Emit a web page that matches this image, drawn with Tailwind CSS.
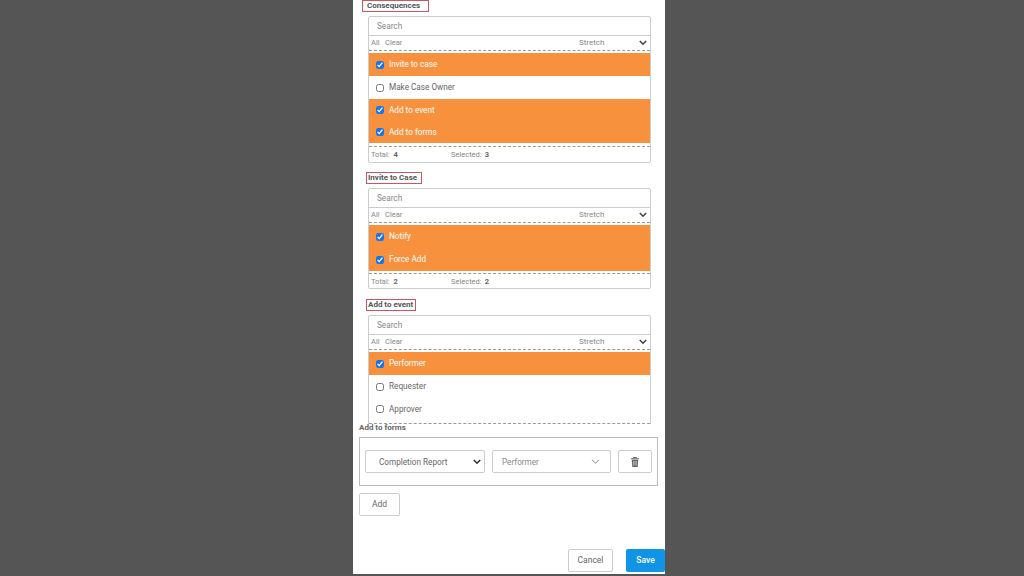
<!doctype html>
<html lang="en">
  <head>
    <meta charset="UTF-8" />
    <title>Consequences</title>
    <script src="https://cdn.jsdelivr.net/npm/@tailwindcss/browser@4"></script>
  </head>
  <body class="h-[576px] w-[1024px] overflow-hidden bg-[#555555] font-['Roboto',sans-serif] text-[8.2px] text-[#666666]">
    <div class="ml-[353px] flex h-[574px] w-[312px] flex-col bg-white">
      <!-- Scrolling lists -->
      <div class="h-[424px] overflow-hidden pl-[15px] pr-[14px]">
        <p class="-ml-[6px] h-[12px] w-fit border border-[#cc5560] pl-[4px] pr-[8px] text-[8px] leading-[10px] font-bold text-[#555555]">Consequences</p>
        <div class="mt-[4px] h-[147px] rounded-[2px] border border-[#cccccc]">
          <div class="flex h-[19px] items-center border-b border-[#cccccc] pl-[8px] text-[#888888]">Search</div>
          <div class="flex h-[15px] items-center border-b border-dashed border-[#999999] pl-[2px] pr-[3px] text-[7.5px] text-[#888888]">
            <span class="w-[8px]">All</span><span class="ml-[6px] w-[16px]">Clear</span><span class="ml-[178px] text-[8px]">Stretch</span>
            <svg class="ml-auto h-[6px] w-[8px]" viewBox="0 0 10 7" fill="none" stroke="#444444" stroke-width="2"><path d="M1 1l4 4 4-4" /></svg>
          </div>
          <div class="mt-[2px] flex h-[23px] items-center gap-[5px] bg-[#f7913d] pl-[7px] text-white"><input type="checkbox" checked class="h-[8px] w-[8px] accent-[#1a73e8]" />Invite to case</div>
          <div class="flex h-[23px] items-center gap-[5px] pl-[7px]"><input type="checkbox" class="h-[8px] w-[8px]" />Make Case Owner</div>
          <div class="flex h-[22px] items-center gap-[5px] bg-[#f7913d] pl-[7px] text-white"><input type="checkbox" checked class="h-[8px] w-[8px] accent-[#1a73e8]" />Add to event</div>
          <div class="flex h-[22px] items-center gap-[5px] bg-[#f7913d] pl-[7px] text-white"><input type="checkbox" checked class="h-[8px] w-[8px] accent-[#1a73e8]" />Add to forms</div>
          <div class="mt-[3px] flex h-[16px] items-center border-t border-dashed border-[#999999] pl-[2px] text-[7.5px] text-[#888888]">
            <span class="w-[80px]">Total: <b class="ml-[2px] text-[#666666]">4</b></span>Selected: <b class="ml-[3px] text-[#666666]">3</b>
          </div>
        </div>

        <p class="-ml-[2px] mt-[9px] h-[12px] w-fit border border-[#cc5560] pl-[1px] pr-[4px] text-[8px] leading-[10px] font-bold text-[#555555]">Invite to Case</p>
        <div class="mt-[4px] h-[101px] rounded-[2px] border border-[#cccccc]">
          <div class="flex h-[19px] items-center border-b border-[#cccccc] pl-[8px] text-[#888888]">Search</div>
          <div class="flex h-[15px] items-center border-b border-dashed border-[#999999] pl-[2px] pr-[3px] text-[7.5px] text-[#888888]">
            <span class="w-[8px]">All</span><span class="ml-[6px] w-[16px]">Clear</span><span class="ml-[178px] text-[8px]">Stretch</span>
            <svg class="ml-auto h-[6px] w-[8px]" viewBox="0 0 10 7" fill="none" stroke="#444444" stroke-width="2"><path d="M1 1l4 4 4-4" /></svg>
          </div>
          <div class="mt-[2px] flex h-[23px] items-center gap-[5px] bg-[#f7913d] pl-[7px] text-white"><input type="checkbox" checked class="h-[8px] w-[8px] accent-[#1a73e8]" />Notify</div>
          <div class="flex h-[23px] items-center gap-[5px] bg-[#f7913d] pl-[7px] text-white"><input type="checkbox" checked class="h-[8px] w-[8px] accent-[#1a73e8]" />Force Add</div>
          <div class="mt-[2px] flex h-[16px] items-center border-t border-dashed border-[#999999] pl-[2px] text-[7.5px] text-[#888888]">
            <span class="w-[80px]">Total: <b class="ml-[2px] text-[#666666]">2</b></span>Selected: <b class="ml-[3px] text-[#666666]">2</b>
          </div>
        </div>

        <p class="-ml-[2px] mt-[10px] h-[12px] w-fit border border-[#cc5560] pl-[1px] pr-[2px] text-[8px] leading-[10px] font-bold text-[#555555]">Add to event</p>
        <div class="mt-[4px] h-[120px] rounded-[2px] border border-[#cccccc]">
          <div class="flex h-[19px] items-center border-b border-[#cccccc] pl-[8px] text-[#888888]">Search</div>
          <div class="flex h-[15px] items-center border-b border-dashed border-[#999999] pl-[2px] pr-[3px] text-[7.5px] text-[#888888]">
            <span class="w-[8px]">All</span><span class="ml-[6px] w-[16px]">Clear</span><span class="ml-[178px] text-[8px]">Stretch</span>
            <svg class="ml-auto h-[6px] w-[8px]" viewBox="0 0 10 7" fill="none" stroke="#444444" stroke-width="2"><path d="M1 1l4 4 4-4" /></svg>
          </div>
          <div class="mt-[2px] flex h-[23px] items-center gap-[5px] bg-[#f7913d] pl-[7px] text-white"><input type="checkbox" checked class="h-[8px] w-[8px] accent-[#1a73e8]" />Performer</div>
          <div class="flex h-[23px] items-center gap-[5px] pl-[7px]"><input type="checkbox" class="h-[8px] w-[8px]" />Requester</div>
          <div class="flex h-[26px] items-center gap-[5px] border-b border-dashed border-[#999999] pb-[3px] pl-[7px]"><input type="checkbox" class="h-[8px] w-[8px]" />Approver</div>
        </div>
      </div>

      <!-- Add to forms -->
      <div class="pl-[6px] pr-[7px]">
        <p class="h-[13px] text-[8px] leading-[7px] font-bold text-[#666666]">Add to forms</p>
        <div class="flex h-[49px] items-center gap-[7px] border border-[#bbbbbb] pl-[5px] pr-[5px]">
          <div class="flex h-[23px] w-[120px] items-center justify-between rounded-[2px] border border-[#cccccc] pl-[13px] pr-[3px] pt-[1px]">
            Completion Report
            <svg class="h-[6px] w-[8px]" viewBox="0 0 10 7" fill="none" stroke="#333333" stroke-width="2"><path d="M1 1l4 4 4-4" /></svg>
          </div>
          <div class="flex h-[23px] w-[119px] items-center justify-between rounded-[2px] border border-[#cccccc] pl-[9px] pr-[10px] pt-[1px] text-[#888888]">
            Performer
            <svg class="h-[6px] w-[9px]" viewBox="0 0 10 7" fill="none" stroke="#777777"><path d="M1 1l4 4 4-4" /></svg>
          </div>
          <div class="flex h-[23px] w-[34px] items-center justify-center rounded-[2px] border border-[#cccccc]">
            <svg class="h-[10px] w-[8px]" viewBox="0 0 8 10" fill="#666666"><path d="M0 1.2h8v1H0zM2.5 0h3l.5 1h-4zM.8 2.8h6.4l-.5 7.2H1.3z" /><path d="M2.7 4v4.5M4 4v4.5M5.3 4v4.5" stroke="#ffffff" stroke-width="0.5" /></svg>
          </div>
        </div>
        <button class="mt-[7px] h-[23px] w-[41px] rounded-[2px] border border-[#cccccc] text-[8.5px] text-[#666666]">Add</button>
      </div>

      <!-- Footer -->
      <div class="mb-[2px] mt-auto flex items-end justify-end gap-[13px]">
        <button class="h-[23px] w-[45px] rounded-[2px] border border-[#cccccc] text-[8.5px] text-[#666666]">Cancel</button>
        <button class="h-[23px] w-[39px] rounded-[2px] bg-[#0f94e6] text-[8.5px] font-medium text-white">Save</button>
      </div>
    </div>
  </body>
</html>
